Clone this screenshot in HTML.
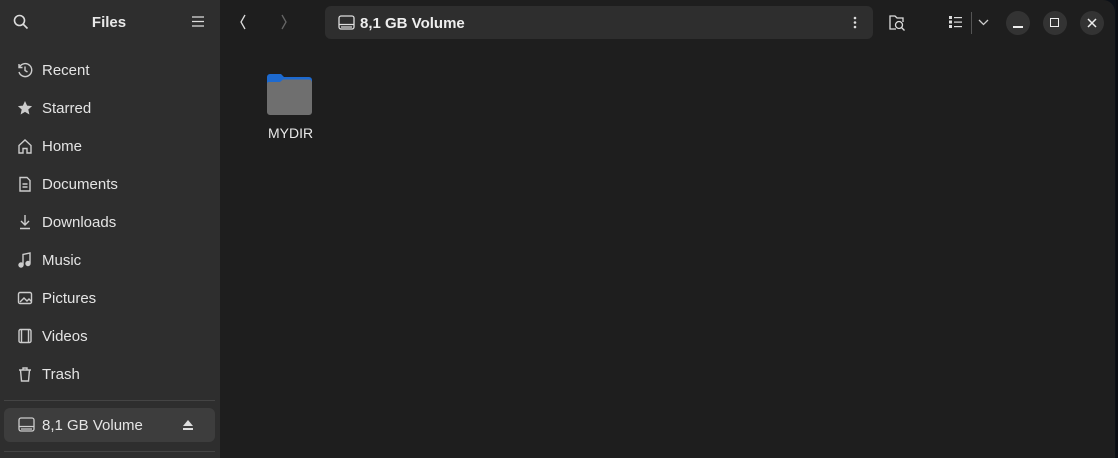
<!DOCTYPE html>
<html><head><style>
*{margin:0;padding:0;box-sizing:border-box}
body{width:1118px;height:458px;background:#0d1117;font-family:"Liberation Sans",sans-serif;color:#e8e8e8;overflow:hidden;position:relative}
.win{position:absolute;left:0;top:0;width:1115px;height:458px;background:#1e1e1e;border-top-right-radius:12px;overflow:hidden}
.side{position:absolute;left:0;top:0;width:220px;height:458px;background:#2e2e2e}
.title{position:absolute;left:0;width:218px;top:14px;text-align:center;font-weight:bold;font-size:15px}
.item{position:absolute;left:42px;font-size:15px;color:#e4e4e4;margin-top:1px}
.ic{position:absolute;left:17px}
.sep{position:absolute;left:4px;width:211px;height:1px;background:#444}
.vol{position:absolute;left:4px;top:408px;width:211px;height:34px;background:#3d3d3d;border-radius:6px}
.path{position:absolute;left:325px;top:6px;width:548px;height:33px;background:#2e2e2e;border-radius:6px}
.circ{position:absolute;top:11px;width:24px;height:24px;border-radius:50%;background:#333}
</style></head><body>
<div class="win">
<div class="side">
<svg style="position:absolute;left:13px;top:14px" width="16" height="16" fill="none" stroke="#ddd" stroke-width="1.6"><circle cx="6.5" cy="6.5" r="5"/><path d="M10 10l4.5 4.5"/></svg>
<div class="title">Files</div>
<svg style="position:absolute;left:192px;top:16px" width="12" height="11" stroke="#ddd" stroke-width="1.3"><path d="M0 1h12M0 5.5h12M0 10h12"/></svg>

<svg class="ic" style="top:62px" width="16" height="16" fill="none" stroke="#ccc" stroke-width="1.4"><path d="M2.5 5A6.5 6.5 0 1 1 2 10"/><path d="M2 2v3.5h3.5"/><path d="M8 4.5v4l2.5 1.5"/></svg>
<div class="item" style="top:61px">Recent</div>
<svg class="ic" style="top:100px" width="16" height="16" fill="#ccc"><path d="M8 1l2.1 4.6 5 .5-3.8 3.4 1.1 5L8 11.9 3.6 14.5l1.1-5L.9 6.1l5-.5z"/></svg>
<div class="item" style="top:99px">Starred</div>
<svg class="ic" style="top:138px" width="16" height="16" fill="none" stroke="#ccc" stroke-width="1.4"><path d="M2 7.5L8 2l6 5.5V15H10v-4.5H6V15H2z"/></svg>
<div class="item" style="top:137px">Home</div>
<svg class="ic" style="top:176px" width="16" height="16" fill="none" stroke="#ccc" stroke-width="1.4"><path d="M3 1.5h7l3 3V15H3z"/><path d="M5.5 8h5M5.5 11h5"/></svg>
<div class="item" style="top:175px">Documents</div>
<svg class="ic" style="top:214px" width="16" height="16" fill="none" stroke="#ccc" stroke-width="1.4"><path d="M8 1v10M4 7l4 4 4-4M3 14.5h10"/></svg>
<div class="item" style="top:213px">Downloads</div>
<svg class="ic" style="top:252px" width="16" height="16" fill="none" stroke="#ccc" stroke-width="1.4"><path d="M6 13V2.5l7-1.5v10"/><circle cx="4" cy="13" r="2" fill="#ccc"/><circle cx="11" cy="11.5" r="2" fill="#ccc"/></svg>
<div class="item" style="top:251px">Music</div>
<svg class="ic" style="top:290px" width="16" height="16" fill="none" stroke="#ccc" stroke-width="1.4"><rect x="1.5" y="2.5" width="13" height="11" rx="1.5"/><path d="M3 12l4-4 3 3 2-2 2.5 2.5"/></svg>
<div class="item" style="top:289px">Pictures</div>
<svg class="ic" style="top:328px" width="16" height="16" fill="none" stroke="#ccc" stroke-width="1.4"><rect x="2" y="1.5" width="12" height="13" rx="1.5"/><path d="M4.5 2v12M11.5 2v12"/></svg>
<div class="item" style="top:327px">Videos</div>
<svg class="ic" style="top:366px" width="16" height="16" fill="none" stroke="#ccc" stroke-width="1.4"><path d="M2 4h12M6 4V2h4v2M3.5 4l1 11h7l1-11"/></svg>
<div class="item" style="top:365px">Trash</div>
<div class="sep" style="top:400px"></div>
<div class="vol"></div>
<svg class="ic" style="top:417px;left:18px" width="17" height="16" fill="none" stroke="#ccc" stroke-width="1.3"><rect x="1" y="1" width="15" height="13" rx="2"/><path d="M1 9.5h15M3 12h11"/></svg>
<div class="item" style="top:416px">8,1 GB Volume</div>
<svg style="position:absolute;left:183px;top:420px" width="10" height="10" fill="#ddd"><path d="M5 0l5 6H0z"/><rect y="8" width="10" height="2"/></svg>
<div class="sep" style="top:451px"></div>
</div>

<svg style="position:absolute;left:239px;top:14px" width="8" height="16" fill="none" stroke="#ddd" stroke-width="1.3"><path d="M6 1L2 8l4 7"/></svg>
<svg style="position:absolute;left:280px;top:14px" width="8" height="16" fill="none" stroke="#666" stroke-width="1.3"><path d="M2 1l4 7-4 7"/></svg>
<div class="path"></div>
<svg style="position:absolute;left:338px;top:15px" width="17" height="15" fill="none" stroke="#ddd" stroke-width="1.3"><rect x="1" y="1" width="15" height="13" rx="2"/><path d="M1 9.5h15M3 12h11"/></svg>
<div style="position:absolute;left:360px;top:15px;font-size:15px;font-weight:bold;color:#eee">8,1 GB Volume</div>
<svg style="position:absolute;left:853px;top:16px" width="4" height="13" fill="#ddd"><circle cx="2" cy="2" r="1.3"/><circle cx="2" cy="6.5" r="1.3"/><circle cx="2" cy="11" r="1.3"/></svg>
<svg style="position:absolute;left:888px;top:14px" width="18" height="17" fill="none" stroke="#ddd" stroke-width="1.3"><path d="M8 15H2V2h5l2 2h6v4"/><circle cx="11" cy="11" r="3.5"/><path d="M13.5 13.5l3 3"/></svg>
<svg style="position:absolute;left:949px;top:16px" width="13" height="12" fill="#ddd"><rect x="0" y="0" width="3" height="3"/><rect x="0" y="4.5" width="3" height="3"/><rect x="0" y="9" width="3" height="3"/><rect x="5" y="1" width="8" height="1.2"/><rect x="5" y="5.5" width="8" height="1.2"/><rect x="5" y="10" width="8" height="1.2"/></svg>
<div style="position:absolute;left:971px;top:12px;width:1px;height:22px;background:#555"></div>
<svg style="position:absolute;left:978px;top:19px" width="11" height="7" fill="none" stroke="#ccc" stroke-width="1.3"><path d="M1 1l4.5 4.5L10 1"/></svg>
<div class="circ" style="left:1006px"></div>
<div style="position:absolute;left:1013px;top:26px;width:10px;height:1.5px;background:#eee"></div>
<div class="circ" style="left:1043px"></div>
<div style="position:absolute;left:1050px;top:18px;width:9px;height:9px;border:1.3px solid #eee"></div>
<div class="circ" style="left:1080px"></div>
<svg style="position:absolute;left:1087px;top:18px" width="10" height="10" stroke="#eee" stroke-width="1.5"><path d="M1 1l8 8M9 1l-8 8"/></svg>

<svg style="position:absolute;left:266px;top:72px" width="48" height="44"><path d="M1 5a3 3 0 0 1 3-3h11l3 3h25a3 3 0 0 1 3 3v6H1z" fill="#1d6ad0"/><path d="M1 12a2 2 0 0 1 2-2h11l3-2.5h26a3 3 0 0 1 3 3V40a3 3 0 0 1-3 3H4a3 3 0 0 1-3-3z" fill="#6f6f6f"/></svg>
<div style="position:absolute;left:268px;top:125px;font-size:14px;color:#e8e8e8">MYDIR</div>
</div>
<div style="position:absolute;left:1116px;top:0;width:2px;height:458px;background:#0a0d12"></div>
</body></html>
